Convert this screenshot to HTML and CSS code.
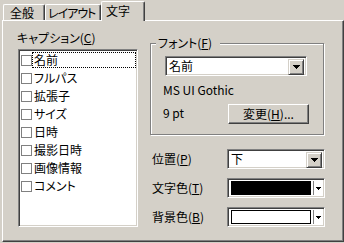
FILE: index.html
```html
<!doctype html>
<html lang="ja">
<head>
  <meta charset="utf-8" />
  <title>文字</title>
  <link rel="stylesheet" href="styles.css">
</head>
<body>
  <div class="tabs">
    <div class="tab tab-general">全般</div>
    <div class="tab tab-layout">レイアウト</div>
    <div class="tab tab-text active">文字</div>
  </div>

  <div class="panel">
    <div class="caption-col">
      <div class="label">キャプション(<u>C</u>)</div>
      <ul class="listbox">
        <li class="focused"><span class="check"></span><span class="item-text">名前</span></li>
        <li><span class="check"></span><span class="item-text">フルパス</span></li>
        <li><span class="check"></span><span class="item-text">拡張子</span></li>
        <li><span class="check"></span><span class="item-text">サイズ</span></li>
        <li><span class="check"></span><span class="item-text">日時</span></li>
        <li><span class="check"></span><span class="item-text">撮影日時</span></li>
        <li><span class="check"></span><span class="item-text">画像情報</span></li>
        <li><span class="check"></span><span class="item-text">コメント</span></li>
      </ul>
    </div>

    <div class="options-col">
      <div class="group">
        <div class="group-title">フォント(<u>F</u>)</div>
        <div class="combo font-combo">
          <span class="combo-value">名前</span>
          <span class="drop-btn">
            <svg width="7" height="4" viewBox="0 0 7 4" shape-rendering="crispEdges"><path d="M0 0h7v1h-1v1h-1v1h-1v1h-1v-1h-1v-1h-1v-1h-1z" fill="#000"/></svg>
          </span>
        </div>
        <div class="font-name">MS UI Gothic</div>
        <div class="font-size-row">
          <span class="font-size">9 pt</span>
          <button class="btn" type="button">変更(<u>H</u>)...</button>
        </div>
      </div>

      <div class="field-row">
        <span class="field-label">位置(<u>P</u>)</span>
        <div class="combo pos-combo">
          <span class="combo-value">下</span>
          <span class="drop-btn">
            <svg width="7" height="4" viewBox="0 0 7 4" shape-rendering="crispEdges"><path d="M0 0h7v1h-1v1h-1v1h-1v1h-1v-1h-1v-1h-1v-1h-1z" fill="#000"/></svg>
          </span>
        </div>
      </div>

      <div class="field-row">
        <span class="field-label">文字色(<u>T</u>)</span>
        <div class="combo color-combo">
          <span class="swatch swatch-black"></span>
          <span class="split"></span>
          <span class="small-arrow">
            <svg width="5" height="3" viewBox="0 0 5 3" shape-rendering="crispEdges"><path d="M0 0h5v1h-1v1h-1v1h-1v-1h-1v-1h-1z" fill="#000"/></svg>
          </span>
        </div>
      </div>

      <div class="field-row">
        <span class="field-label">背景色(<u>B</u>)</span>
        <div class="combo color-combo">
          <span class="swatch swatch-white"></span>
          <span class="split"></span>
          <span class="small-arrow">
            <svg width="5" height="3" viewBox="0 0 5 3" shape-rendering="crispEdges"><path d="M0 0h5v1h-1v1h-1v1h-1v-1h-1v-1h-1z" fill="#000"/></svg>
          </span>
        </div>
      </div>
    </div>
  </div>
</body>
</html>
```

FILE: styles.css
```css
/* classic win32 property page, 9pt ui font */
:root{
  --face:#d4d0c8;
  --light:#ffffff;
  --shadow:#808080;
  --dark:#404040;
}
html,body{margin:0;}
body{
  background:var(--face);
  width:344px;height:243px;overflow:hidden;
  font-family:"Noto Sans CJK JP","Noto Sans",sans-serif;
  font-size:12px;line-height:14px;color:#000;
  font-feature-settings:"palt" 1;
}
u{text-decoration:underline;text-underline-offset:1px}

/* tab strip */
.tabs{display:flex;align-items:flex-end;height:20px;padding-left:3px;position:relative;z-index:1}
.tab{
  box-sizing:border-box;height:16px;padding-top:1px;white-space:nowrap;overflow:hidden;
  border:1px solid;border-bottom:0;border-color:var(--light) var(--dark) var(--light) var(--light);
  box-shadow:inset -1px 0 0 var(--shadow);border-radius:2px 2px 0 0;background:var(--face);
}
.tab-general{width:42px;padding-left:6px}
.tab-layout{width:56px;padding-left:2px;letter-spacing:-1px}
.tab-text{width:44px;padding-left:4px}
.tab.active{height:20px;margin-bottom:-1px;padding-top:2px}

/* page */
.panel{
  box-sizing:border-box;margin-left:2px;width:342px;height:222px;
  border:1px solid;border-color:var(--light) var(--dark) var(--dark) var(--light);
  box-shadow:inset -1px -1px 0 var(--shadow);
  display:flex;padding:10px 0 0 14px;
}
.caption-col{width:121px}
.label{margin-bottom:4px}
.listbox{
  box-sizing:border-box;list-style:none;margin:0 0 0 1px;padding:0;
  width:120px;height:178px;background:#fff;
  border:1px solid;border-color:var(--shadow) var(--light) var(--light) var(--shadow);
  box-shadow:inset 1px 1px 0 var(--dark),inset -1px -1px 0 var(--face);
  padding:1px 1px 0 1px;
}
.listbox li{display:flex;align-items:center;height:18px}
.check{box-sizing:border-box;width:11px;height:11px;border:1px solid var(--shadow);margin-left:1px;flex:none}
.item-text{box-sizing:border-box;flex:1;height:16px;line-height:14px;padding:0 0 0 1px;border:1px solid transparent}
.focused .item-text{border:1px dotted #000}

.options-col{margin-left:12px;padding-top:12px}

/* font group box */
.group{
  position:relative;box-sizing:border-box;width:174px;height:92px;
  border:1px solid var(--shadow);
  box-shadow:1px 1px 0 var(--light),inset 1px 1px 0 var(--light);
  padding:12px 12px 0 14px;
}
.group-title{position:absolute;top:-8px;left:5px;padding:0 8px 0 2px;background:var(--face)}

.combo{
  box-sizing:border-box;height:20px;background:#fff;display:flex;
  border:1px solid;border-color:var(--shadow) var(--light) var(--light) var(--shadow);
  box-shadow:inset 1px 1px 0 var(--dark),inset -1px -1px 0 var(--face);
  padding:2px;
}
.combo-value{flex:1;padding-left:1px;line-height:14px}
.drop-btn{
  box-sizing:border-box;width:16px;height:16px;background:var(--face);
  border:1px solid;border-color:var(--face) var(--dark) var(--dark) var(--face);
  box-shadow:inset 1px 1px 0 var(--light),inset -1px -1px 0 var(--shadow);
  display:flex;align-items:center;justify-content:center;
}
.drop-btn svg{display:block}
.font-combo{width:142px}
.font-name{margin:7px 0 0 -2px}
.font-size-row{display:flex;align-items:flex-start;margin-top:7px}
.font-size{width:65px;margin-left:-2px;padding-top:2px}
.btn{
  box-sizing:border-box;width:81px;height:20px;margin:0;padding:0;
  background:var(--face);font:inherit;color:#000;
  border:1px solid;border-color:var(--light) var(--dark) var(--dark) var(--light);
  box-shadow:inset -1px -1px 0 var(--shadow);
}

.field-row{display:flex;align-items:center;height:20px;margin-top:9px;padding-left:2px}
.group + .field-row{margin-top:14px}
.field-label{width:75px}
.pos-combo,.color-combo{width:98px}
.color-combo{padding:2px 2px 2px 3px;align-items:stretch}
.swatch{flex:1;border:1px solid #000}
.swatch-black{background:#000}
.swatch-white{background:#fff}
.split{width:1px;margin:0 0 0 2px;background:var(--shadow);box-shadow:1px 0 0 var(--light)}
.small-arrow{width:8px;display:flex;align-items:center;justify-content:center}
.small-arrow svg{display:block}
```
